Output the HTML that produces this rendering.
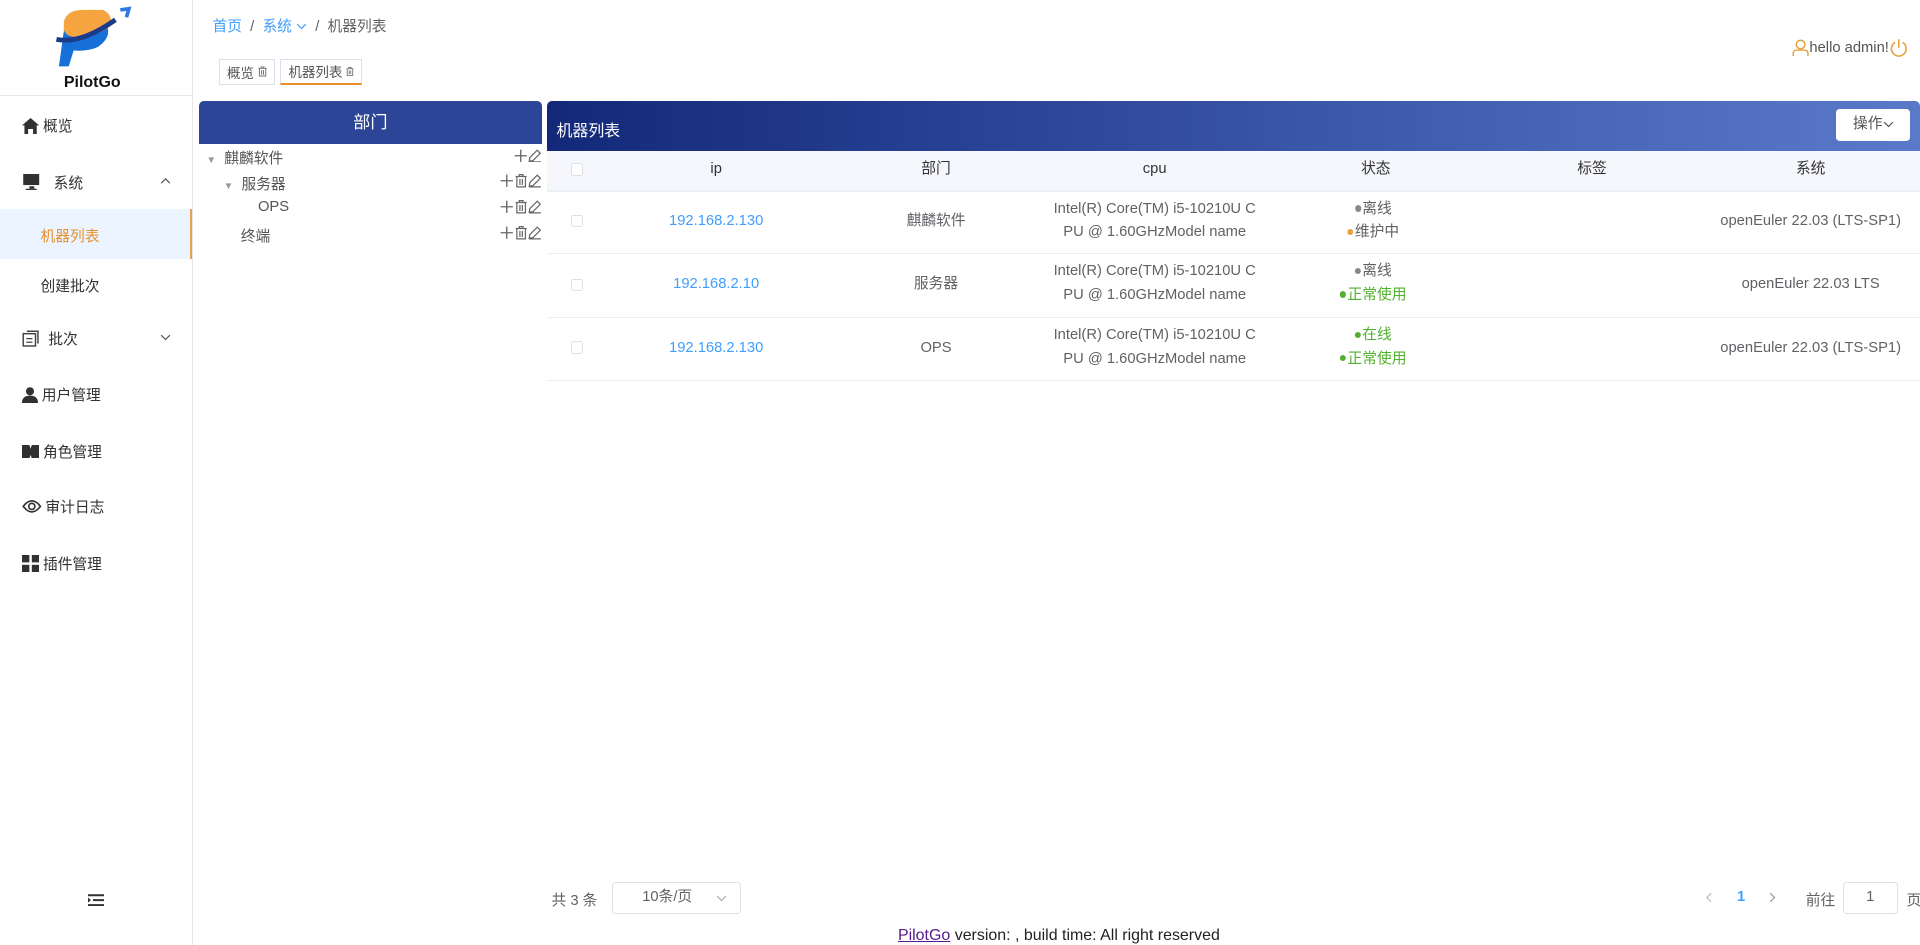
<!DOCTYPE html>
<html><head><meta charset="utf-8"><style>
*{box-sizing:border-box;margin:0;padding:0}
html,body{width:1920px;height:945px;overflow:hidden;background:#fff}
#r{zoom:1.2284;width:1563px;height:770px;position:relative;font-family:"Liberation Sans","Noto Sans CJK SC",sans-serif;font-size:12px;color:#333}
.a{position:absolute}
.side{left:0;top:0;width:157px;height:770px;border-right:1px solid #e6e6e6}
.mi{position:absolute;left:18px;font-size:12px;color:#303133;display:flex;align-items:center;gap:3px}
.tree .row{position:absolute;font-size:12px;color:#555;white-space:nowrap}
.ops{position:absolute;right:0;display:flex;gap:1px}
.c{position:absolute;text-align:center;transform:translateX(-50%);white-space:nowrap;font-size:12px;line-height:19px}
.cb{position:absolute;left:465px;width:10px;height:10px;border:1px solid #dcdfe6;border-radius:2px;background:#fff}
.hl{position:absolute;left:445px;width:1118px;height:1px;background:#ebeef5}
.dot{display:inline-block;width:5px;height:5px;border-radius:50%;margin-right:1px;vertical-align:1px}
.tab{position:absolute;top:48px;height:21px;border:1px solid #dcdfe6;font-size:11px;color:#555;display:flex;align-items:center;padding:0 6px;gap:3px;white-space:nowrap}
</style></head><body><div id="r">
<svg width="0" height="0" style="position:absolute"><defs>
<symbol id="tr" viewBox="0 0 10 11"><path d="M0.5 2H9.5M3.5 2V0.5H6.5V2M1.5 2V10.5H8.5V2M4 4V9M6 4V9" fill="none" stroke="#666" stroke-width="1"/></symbol>
<symbol id="pl" viewBox="0 0 11 11"><path d="M5.5 0.5V10.5M0.5 5.5H10.5" stroke="#666" stroke-width="1.1"/></symbol>
<symbol id="pe" viewBox="0 0 11 11"><path d="M7.5 1L10 3.5L4 9.5L1 10L1.5 7Z M1 10.5H10.5" fill="none" stroke="#666" stroke-width="1"/></symbol>
</defs></svg>
<div class="a side">
 <svg class="a" style="left:44px;top:4px" width="66" height="54" viewBox="0 0 66 54">
  <path d="M9 14 L40 12 Q50 24 36 34 Q28 38 16 37 L12 50 L4 50 Z" fill="#1670d8"/>
  <path d="M8 14 Q10 4 24 4 L40 4 Q48 8 46 16 Q40 24 22 26 Q10 27 8 20Z" fill="#f6a440"/>
  <path d="M2 28 Q22 32 50 12" stroke="#1b3a8a" stroke-width="4" fill="none"/>
  <path d="M50 12 L57 7" stroke="#fff" stroke-width="2"/>
  <path d="M54 4 L61 3 L59 10" stroke="#2a7be0" stroke-width="3" fill="none"/>
 </svg>
 <div class="a" style="left:52px;top:60px;font-weight:bold;font-size:13px;color:#111">PilotGo</div>
 <div class="a" style="left:0;top:77px;width:156px;height:1px;background:#e6e6e6"></div>
 <div class="mi" style="top:94px"><svg width="14" height="13" viewBox="0 0 14 13"><path d="M7 0 L14 6 L12 6 L12 13 L9 13 L9 9 L5 9 L5 13 L2 13 L2 6 L0 6Z" fill="#303133"/></svg>概览</div>
 <div class="mi" style="top:140px"><svg width="16" height="14" viewBox="0 0 16 14"><rect x="1" y="0" width="13" height="9" fill="#303133"/><rect x="6" y="10" width="4" height="2" fill="#303133"/><rect x="3" y="12" width="9" height="1" fill="#303133"/></svg>&nbsp;&nbsp;系统</div>
 <svg class="a" style="left:130px;top:144px" width="9" height="6" viewBox="0 0 9 6"><path d="M1 5L4.5 1.5L8 5" fill="none" stroke="#555"/></svg>
 <div class="a" style="left:0;top:170px;width:156px;height:41px;background:#ecf5ff;border-right:2px solid #e6a05a"></div>
 <div class="a" style="left:33px;top:183px;color:#e6902f">机器列表</div>
 <div class="a" style="left:33px;top:224px;color:#303133">创建批次</div>
 <div class="mi" style="top:267px"><svg width="15" height="14" viewBox="0 0 15 14"><rect x="1" y="3" width="10" height="10" fill="none" stroke="#444" stroke-width="1.2"/><path d="M4 1 H13 V11" fill="none" stroke="#444" stroke-width="1.2"/><path d="M3.5 7H8.5M3.5 10H8.5" stroke="#444"/></svg>&nbsp;批次</div>
 <svg class="a" style="left:130px;top:272px" width="9" height="6" viewBox="0 0 9 6"><path d="M1 1L4.5 4.5L8 1" fill="none" stroke="#555"/></svg>
 <div class="mi" style="top:313px"><svg width="13" height="13" viewBox="0 0 13 13"><circle cx="6.5" cy="3.5" r="3.3" fill="#303133"/><path d="M0 13 Q0 7 6.5 7 Q13 7 13 13Z" fill="#303133"/></svg>用户管理</div>
 <div class="mi" style="top:359px"><svg width="14" height="11" viewBox="0 0 14 11"><path d="M0 0H6L7 3L8 0H14V11H8L7 8L6 11H0Z" fill="#303133"/></svg>角色管理</div>
 <div class="mi" style="top:404px"><svg width="16" height="12" viewBox="0 0 16 12"><path d="M1 6 Q8 -3 15 6 Q8 15 1 6Z" fill="none" stroke="#303133" stroke-width="1.3"/><circle cx="8" cy="6" r="2.5" fill="none" stroke="#303133" stroke-width="1.3"/></svg>审计日志</div>
 <div class="mi" style="top:450px"><svg width="14" height="14" viewBox="0 0 14 14"><rect x="0" y="0" width="6" height="6" fill="#303133"/><rect x="8" y="0" width="6" height="6" fill="#303133"/><rect x="0" y="8" width="6" height="6" fill="#303133"/><rect x="8" y="8" width="6" height="6" fill="#303133"/></svg>插件管理</div>
 <svg class="a" style="left:72px;top:728px" width="13" height="10" viewBox="0 0 13 10"><path d="M0 1H13M4 5H13M0 9H13" stroke="#303133" stroke-width="1.6"/><path d="M0 3L2.5 5L0 7Z" fill="#303133"/></svg>
</div>

<div class="a" style="left:173px;top:12px;font-size:12px;color:#606266;white-space:nowrap"><span style="color:#409eff">首页</span>&nbsp;&nbsp;/&nbsp;&nbsp;<span style="color:#409eff">系统 <svg width="9" height="6" viewBox="0 0 9 6"><path d="M1 1L4.5 4.5L8 1" fill="none" stroke="#409eff"/></svg></span>&nbsp;&nbsp;/&nbsp;&nbsp;机器列表</div>
<div class="tab" style="left:178px;width:46px">概览<svg width="8" height="9"><use href="#tr"/></svg></div>
<div class="tab" style="left:228px;width:67px;border-bottom:2px solid #e6902f">机器列表<svg width="8" height="9"><use href="#tr"/></svg></div>
<div class="a" style="left:1459px;top:31px;font-size:12px;color:#555;display:flex;align-items:center;white-space:nowrap"><svg width="14" height="14" viewBox="0 0 14 14"><circle cx="7" cy="4.5" r="3.5" fill="none" stroke="#e6a23c" stroke-width="1.2"/><path d="M1 14 V12 Q1 9 4 9 H10 Q13 9 13 12 V14" fill="none" stroke="#e6a23c" stroke-width="1.2"/></svg>hello admin!<svg width="16" height="16" viewBox="0 0 16 16"><path d="M5 3.5 A6 6 0 1 0 11 3.5" fill="none" stroke="#e6a23c" stroke-width="1.3"/><path d="M8 1V8" stroke="#e6a23c" stroke-width="1.3"/></svg></div>

<div class="a tree" style="left:162px;top:82px;width:279px;height:140px">
 <div class="a" style="left:0;top:0;width:279px;height:35px;background:#2d4596;border-radius:4px 4px 0 0;color:#fff;font-size:14px;text-align:center;line-height:35px">部门</div>
 <div class="row" style="left:6px;top:38px"><span style="font-size:8px;color:#999">▼</span>&nbsp;&nbsp;麒麟软件</div><div class="ops" style="top:39px"><svg width="11" height="11"><use href="#pl"/></svg><svg width="11" height="11"><use href="#pe"/></svg></div>
 <div class="row" style="left:20px;top:59px"><span style="font-size:8px;color:#999">▼</span>&nbsp;&nbsp;服务器</div><div class="ops" style="top:60px"><svg width="11" height="11"><use href="#pl"/></svg><svg width="10" height="11"><use href="#tr"/></svg><svg width="11" height="11"><use href="#pe"/></svg></div>
 <div class="row" style="left:48px;top:80px">OPS</div><div class="ops" style="top:81px"><svg width="11" height="11"><use href="#pl"/></svg><svg width="10" height="11"><use href="#tr"/></svg><svg width="11" height="11"><use href="#pe"/></svg></div>
 <div class="row" style="left:34px;top:101px">终端</div><div class="ops" style="top:102px"><svg width="11" height="11"><use href="#pl"/></svg><svg width="10" height="11"><use href="#tr"/></svg><svg width="11" height="11"><use href="#pe"/></svg></div>
</div>

<div class="a" style="left:445px;top:82px;width:1118px;height:41px;background:linear-gradient(90deg,#132878,#3a56a8 55%,#5b79c9);border-radius:4px 4px 0 0"></div>
<div class="a" style="left:453px;top:95px;color:#fff;font-size:13px">机器列表</div>
<div class="a" style="left:1495px;top:89px;width:60px;height:26px;background:#fff;border-radius:3px;font-size:12px;color:#555;line-height:26px;text-align:center;white-space:nowrap">操作<svg width="9" height="6" viewBox="0 0 9 6"><path d="M1 1L4.5 4.5L8 1" fill="none" stroke="#555"/></svg></div>
<div class="a" style="left:445px;top:123px;width:1118px;height:32px;background:#f5f7fc"></div>
<div class="cb" style="top:133px"></div>
<div class="c" style="left:583px;top:129px">ip</div>
<div class="c" style="left:762px;top:129px">部门</div>
<div class="c" style="left:940px;top:129px">cpu</div>
<div class="c" style="left:1120px;top:129px">状态</div>
<div class="c" style="left:1296px;top:129px">标签</div>
<div class="c" style="left:1474px;top:129px">系统</div>
<div class="hl" style="top:155px"></div>

<div class="cb" style="top:175px"></div>
<div class="c" style="left:583px;top:171px;color:#409eff">192.168.2.130</div>
<div class="c" style="left:762px;top:171px;color:#606266">麒麟软件</div>
<div class="c" style="left:940px;top:161px;color:#606266">Intel(R) Core(TM) i5-10210U C<br>PU @ 1.60GHzModel name</div>
<div class="c" style="left:1118px;top:161px;color:#606266"><span class="dot" style="background:#888"></span>离线<br><span class="dot" style="background:#e6a23c"></span>维护中</div>
<div class="c" style="left:1474px;top:171px;color:#606266">openEuler 22.03 (LTS-SP1)</div>
<div class="hl" style="top:206px"></div>

<div class="cb" style="top:227px"></div>
<div class="c" style="left:583px;top:222px;color:#409eff">192.168.2.10</div>
<div class="c" style="left:762px;top:222px;color:#606266">服务器</div>
<div class="c" style="left:940px;top:212px;color:#606266">Intel(R) Core(TM) i5-10210U C<br>PU @ 1.60GHzModel name</div>
<div class="c" style="left:1118px;top:212px;color:#606266"><span class="dot" style="background:#888"></span>离线<br><span style="color:#52b030"><span class="dot" style="background:#52b030"></span>正常使用</span></div>
<div class="c" style="left:1474px;top:222px;color:#606266">openEuler 22.03 LTS</div>
<div class="hl" style="top:258px"></div>

<div class="cb" style="top:278px"></div>
<div class="c" style="left:583px;top:274px;color:#409eff">192.168.2.130</div>
<div class="c" style="left:762px;top:274px;color:#606266">OPS</div>
<div class="c" style="left:940px;top:264px;color:#606266">Intel(R) Core(TM) i5-10210U C<br>PU @ 1.60GHzModel name</div>
<div class="c" style="left:1118px;top:264px;color:#52b030"><span class="dot" style="background:#52b030"></span>在线<br><span class="dot" style="background:#52b030"></span>正常使用</div>
<div class="c" style="left:1474px;top:274px;color:#606266">openEuler 22.03 (LTS-SP1)</div>
<div class="hl" style="top:309px"></div>

<div class="a" style="left:449px;top:724px;color:#606266">共 3 条</div>
<div class="a" style="left:498px;top:718px;width:105px;height:26px;border:1px solid #dcdfe6;border-radius:3px;color:#606266;line-height:24px;padding-left:24px">10条/页<svg style="position:absolute;right:10px;top:10px" width="9" height="6" viewBox="0 0 9 6"><path d="M1 1L4.5 4.5L8 1" fill="none" stroke="#aaa"/></svg></div>
<svg class="a" style="left:1388px;top:726px" width="6" height="9" viewBox="0 0 6 9"><path d="M5 1L1.5 4.5L5 8" fill="none" stroke="#bbb"/></svg>
<div class="a" style="left:1414px;top:724px;color:#409eff;font-weight:bold">1</div>
<svg class="a" style="left:1440px;top:726px" width="6" height="9" viewBox="0 0 6 9"><path d="M1 1L4.5 4.5L1 8" fill="none" stroke="#999"/></svg>
<div class="a" style="left:1470px;top:724px;color:#606266">前往</div>
<div class="a" style="left:1500px;top:718px;width:45px;height:26px;border:1px solid #dcdfe6;border-radius:3px;text-align:center;line-height:24px;color:#606266">1</div>
<div class="a" style="left:1552px;top:724px;color:#606266">页</div>
<div class="a" style="left:731px;top:755px;font-size:13px;color:#222;white-space:nowrap"><span style="color:#551a8b;text-decoration:underline">PilotGo</span> version: , build time: All right reserved</div>
</div></body></html>
